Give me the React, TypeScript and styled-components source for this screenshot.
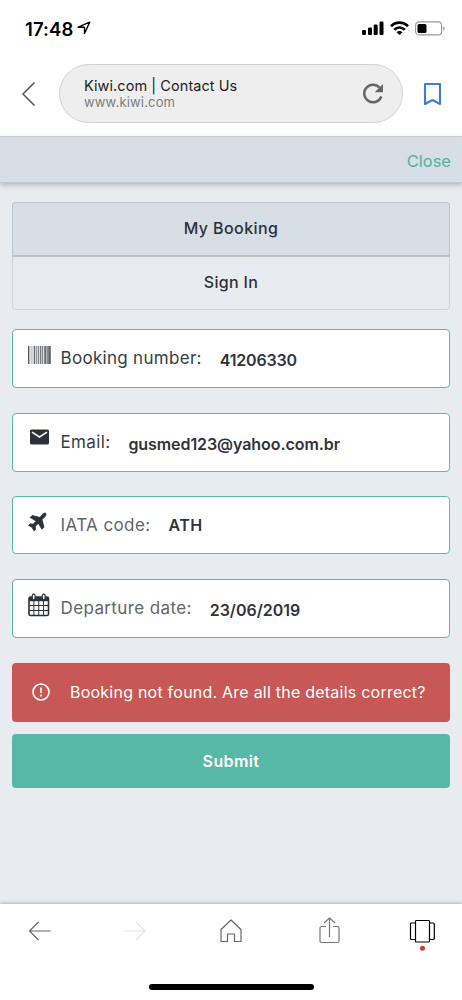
import React from 'react';
import styled, { createGlobalStyle } from 'styled-components';

const Global = createGlobalStyle`
  * { box-sizing: border-box; }
  body { margin: 0; background: #fff; font-family: Inter, "Liberation Sans", sans-serif; }
  button { font: inherit; border: 0; background: none; padding: 0; margin: 0; color: inherit; }
  svg { display: block; flex: none; }
`;

const Screen = styled.div`
  width: 462px;
  height: 1000px;
  display: flex;
  flex-direction: column;
  overflow: hidden;
  background: #e8ecf1;
`;

const StatusBar = styled.div`
  height: 56px;
  flex: none;
  background: #fff;
  display: flex;
  align-items: center;
  justify-content: space-between;
  padding: 0 17px 0 25px;
`;

const Cluster = styled.div<{ $gap: number }>`
  display: flex;
  align-items: center;
  gap: ${(p) => p.$gap}px;
`;

const Label = styled.span<{
  $size: number;
  $weight?: number;
  $color?: string;
  $track?: number;
  $drop?: number;
  $lift?: number;
}>`
  font-size: ${(p) => p.$size}px;
  font-weight: ${(p) => p.$weight ?? 400};
  color: ${(p) => p.$color ?? '#2c3138'};
  letter-spacing: ${(p) => p.$track ?? 0}px;
  line-height: 20px;
  white-space: nowrap;
  padding-top: ${(p) => p.$drop ?? 0}px;
  padding-bottom: ${(p) => p.$lift ?? 0}px;
`;

const AddressBar = styled.div`
  height: 81px;
  flex: none;
  background: #fff;
  border-bottom: 1px solid #cbd1d6;
  display: flex;
  align-items: flex-start;
  padding: 8px 19px 0 20px;
`;

const NavSlot = styled.button<{ $width: number }>`
  width: ${(p) => p.$width}px;
  height: 59px;
  display: flex;
  align-items: center;
`;

const Pill = styled.div`
  width: 344px;
  height: 59px;
  border-radius: 30px;
  border: 1px solid #d2d2d2;
  background: #eee;
  display: flex;
  align-items: center;
  justify-content: space-between;
  padding: 0 18px 0 24px;
  margin-right: 20px;
`;

const PageTitle = styled.div`
  display: flex;
  flex-direction: column;
  span { line-height: 17px; }
`;

const Header = styled.header`
  height: 46px;
  flex: none;
  background: #d7dee6;
  border-bottom: 1px solid #c4cad3;
  box-shadow: 0 2px 5px rgba(90, 100, 120, 0.4);
  display: flex;
  align-items: center;
  justify-content: flex-end;
  padding-right: 11px;
`;

const Main = styled.main`
  flex: 1;
  display: flex;
  flex-direction: column;
  padding: 19px 12px 0;
`;

const Tabs = styled.div`
  height: 108px;
  border: 1px solid #cdd3d8;
  border-radius: 4px;
  display: flex;
  flex-direction: column;
  margin-bottom: 19px;
`;

const Tab = styled.button<{ $active?: boolean }>`
  height: ${(p) => (p.$active ? 55 : 53)}px;
  margin: ${(p) => (p.$active ? '-1px -1px 0' : '0')};
  border: ${(p) => (p.$active ? '1px solid #bac2cb' : '0')};
  border-bottom-width: ${(p) => (p.$active ? 2 : 0)}px;
  border-radius: ${(p) => (p.$active ? '4px 4px 0 0' : '0')};
  background: ${(p) => (p.$active ? '#d7dee6' : 'transparent')};
  display: flex;
  align-items: center;
  justify-content: center;
`;

const Fields = styled.div`
  display: grid;
  grid-template-rows: 59px 59px 58px 59px;
  height: 309px;
  align-content: space-between;
`;

const Field = styled.label`
  border: 1px solid #5dbaa3;
  border-radius: 4px;
  background: #fff;
  display: flex;
  align-items: center;
  padding-left: 15px;
`;

const IconSlot = styled.span<{ $lift: number }>`
  width: 32.5px;
  padding-bottom: ${(p) => p.$lift}px;
`;

const Value = styled(Label)`
  margin-left: 18px;
`;

const Alert = styled.div`
  height: 59px;
  margin-top: 25px;
  border-radius: 4px;
  background: #c75855;
  display: flex;
  align-items: center;
  padding-left: 20px;
  gap: 20px;

  svg { margin-bottom: 1px; }
`;

const Submit = styled.button`
  height: 54px;
  margin-top: 12px;
  border-radius: 4px;
  background: #57b8a6;
`;

const Toolbar = styled.nav`
  height: 96px;
  flex: none;
  background: #fff;
  box-shadow: 0 -1px 3px rgba(0, 0, 0, 0.25);
  display: flex;
  flex-direction: column;
  align-items: center;
  justify-content: space-between;
  padding: 11px 25px 10px;
`;

const ToolRow = styled.div`
  align-self: stretch;
  display: flex;
  justify-content: space-between;
`;

const Tool = styled.button`
  display: flex;
  width: 30px;
  height: 38px;
  justify-content: center;
`;

const HomeIndicator = styled.div`
  width: 165px;
  height: 6px;
  border-radius: 3px;
  background: #000;
`;

const barcode: [number, number, number][] = [
  [0, 1.4, 0.8], [2.6, 1, 0.4], [4.6, 0.8, 0.5], [6.2, 1, 0.9], [8.3, 1, 0.7], [10.3, 0.9, 0.8],
  [12.2, 1.1, 0.8], [14.2, 1, 0.75], [16.2, 2, 0.7], [18.7, 1, 0.8], [20.2, 2.6, 0.75],
];

const BarcodeIcon = () => (
  <svg width="23" height="18" viewBox="0 0 23 18" fill="#2c3138">
    {barcode.map(([x, w, o]) => <rect key={x} x={x} width={w} height="18" opacity={o} />)}
  </svg>
);

const MailIcon = () => (
  <svg width="23" height="16" viewBox="0 0 23 16">
    <rect x="2" y="0.5" width="19" height="15" rx="1.6" fill="#2c3138" />
    <path d="M4 3.2 11.5 8 19 3.2" fill="none" stroke="#fff" strokeWidth="1.5" />
  </svg>
);

const PlaneIcon = () => (
  <svg width="20" height="20" viewBox="0 0 20 20">
    <path
      d="M17.600 1.300c.8.9.3 2.300-.6 3.200l-3 3.100 1.900 7.700-2 1.900-3.500-6-3.300 3.200.4 3-1.500 1.400-1.900-3.500L.7 13.400l1.400-1.500 3 .4 3.200-3.300L2.200 5.500l2-2 7.600 1.900 3-3.100c.9-.9 2.200-1.600 2.800-1z"
      fill="#2c3138"
      stroke="#2c3138"
      strokeWidth="0.900"
      strokeLinejoin="round"
    />
  </svg>
);

const CalendarIcon = () => (
  <svg width="22" height="24" viewBox="0 0 22 24">
    <rect x="1" y="4" width="19.500" height="18.500" rx="1.500" fill="#fff" stroke="#2c3138" strokeWidth="1.600" />
    <path d="M1 4h19.500v4.200H1z" fill="#2c3138" />
    <path d="M5.900 8V22.500M10.750 8V22.500M15.600 8V22.500M1 12.500h19.500M1 17.500h19.500" stroke="#2c3138" strokeWidth="1" />
    <rect x="4.300" y="1.200" width="2.800" height="5.700" rx="1.400" fill="#fff" stroke="#2c3138" strokeWidth="1.200" />
    <rect x="14.300" y="1.200" width="2.800" height="5.700" rx="1.400" fill="#fff" stroke="#2c3138" strokeWidth="1.200" />
  </svg>
);

const fields = [
  { icon: <BarcodeIcon />, iconLift: 8, label: 'Booking number:', color: '#383d43', track: 0.3, lift: 2, value: '41206330', drop: 3, valueTrack: -0.2 },
  { icon: <MailIcon />, iconLift: 10, label: 'Email:', color: '#383d43', track: 0.35, lift: 0, value: 'gusmed123@yahoo.com.br', drop: 3, valueTrack: -0.07 },
  { icon: <PlaneIcon />, iconLift: 7, label: 'IATA code:', color: '#60656c', track: 0.4, lift: 0, value: 'ATH', drop: 0, valueTrack: 0.5 },
  { icon: <CalendarIcon />, iconLift: 6, label: 'Departure date:', color: '#60656c', track: 0.38, lift: 0, value: '23/06/2019', drop: 3, valueTrack: -0.02 },
];

export default function App() {
  return (
    <Screen>
      <Global />
      <StatusBar>
        <Cluster $gap={4}>
          <Label $size={18.5} $weight={600} $color="#000" $track={0.1} $drop={1}>17:48</Label>
          <svg width="14" height="14" viewBox="0 0 14 14" fill="none" stroke="#000" strokeWidth="1.400" strokeLinejoin="round">
            <path d="M12.700 1.200 1.200 6.200H7.500V12.500z" />
          </svg>
        </Cluster>
        <Cluster $gap={6}>
          <svg width="22" height="14" viewBox="0 0 22 14">
            <rect x="0" y="9" width="4" height="5" rx="1.200" />
            <rect x="6" y="6.500" width="4" height="7.500" rx="1.200" />
            <rect x="11.700" y="3.500" width="4" height="10.500" rx="1.200" />
            <rect x="17.500" y="0.500" width="4" height="13.500" rx="1.200" />
          </svg>
          <svg width="19" height="14" viewBox="0 0 19 14" fill="none" stroke="#000" strokeWidth="2.700">
            <path d="M1 5.200a12 12 0 0 1 17 0" />
            <path d="M4.200 8.700a7.500 7.500 0 0 1 10.600 0" />
            <path d="M9.500 14 6.600 11.200a4 4 0 0 1 5.800 0z" fill="#000" stroke="none" />
          </svg>
          <svg width="30" height="15" viewBox="0 0 30 15">
            <rect x="0.600" y="0.900" width="26" height="13" rx="3.500" fill="none" stroke="#999" strokeWidth="1.100" />
            <rect x="2.500" y="2.900" width="9" height="9" rx="1.500" />
            <path d="M28.200 5.200c2 .8 2 3.600 0 4.400z" fill="#999" />
          </svg>
        </Cluster>
      </StatusBar>
      <AddressBar>
        <NavSlot $width={39}>
          <svg width="16" height="26" viewBox="0 0 16 26" fill="none" stroke="#555" strokeWidth="1.500">
            <path d="M14.500 1.500 3 13l11.500 11.500" />
          </svg>
        </NavSlot>
        <Pill>
          <PageTitle>
            <Label $size={14.5} $color="#222" $track={0.06}>Kiwi.com | Contact Us</Label>
            <Label $size={13} $color="#7c7c7c" $track={0.17}>www.kiwi.com</Label>
          </PageTitle>
          <svg width="22" height="22" viewBox="0 0 22 22" fill="none" stroke="#666" strokeWidth="2.500">
            <path d="M17.600 4.600A8.800 8.800 0 1 0 19.300 13.500" />
            <path d="M21 1v8.300h-8.300z" fill="#666" stroke="none" />
          </svg>
        </Pill>
        <NavSlot $width={20}>
          <svg width="20" height="24" viewBox="0 0 20 24" fill="none" stroke="#3b7dd8" strokeWidth="2.100" strokeLinejoin="round">
            <path d="M2 2h15v20l-7.500-4L2 22z" />
          </svg>
        </NavSlot>
      </AddressBar>
      <Header>
        <Label $size={16.5} $color="#50b49c" $track={0} $drop={2}>Close</Label>
      </Header>
      <Main>
        <Tabs>
          <Tab $active><Label $size={16} $weight={500} $track={0.4} $lift={2}>My Booking</Label></Tab>
          <Tab><Label $size={16} $weight={500} $track={0.3} $lift={2}>Sign In</Label></Tab>
        </Tabs>
        <Fields>
          {fields.map((f) => (
            <Field key={f.label}>
              <IconSlot $lift={f.iconLift}>{f.icon}</IconSlot>
              <Label $size={17} $color={f.color} $track={f.track} $lift={f.lift}>{f.label}</Label>
              <Value $size={16} $weight={600} $color="#30343a" $drop={f.drop} $track={f.valueTrack}>{f.value}</Value>
            </Field>
          ))}
        </Fields>
        <Alert>
          <svg width="18" height="18" viewBox="0 0 18 18" fill="none" stroke="#fff" strokeWidth="1.600">
            <circle cx="9" cy="9" r="8" />
            <path d="M9 4.500v5.500M9 11.600v1.800" />
          </svg>
          <Label $size={16} $color="#fff" $track={0.23} $lift={1}>Booking not found. Are all the details correct?</Label>
        </Alert>
        <Submit><Label $size={16} $weight={600} $color="#fff" $track={0.4}>Submit</Label></Submit>
      </Main>
      <Toolbar>
        <ToolRow>
          <Tool>
            <svg width="24" height="32" viewBox="0 0 24 32" fill="none" stroke="#666" strokeWidth="1.200">
              <path d="M22.700 16H1.700M10.500 7l-9 9 9 9" />
            </svg>
          </Tool>
          <Tool>
            <svg width="24" height="32" viewBox="0 0 24 32" fill="none" stroke="#e3e3e3" strokeWidth="1.200">
              <path d="M0 16h21M12 7l9 9-9 9" />
            </svg>
          </Tool>
          <Tool>
            <svg width="24" height="32" viewBox="0 0 24 32" fill="none" stroke="#666" strokeWidth="1.200" strokeLinejoin="round">
              <path d="M2 14.500 12 5l10 9.500V26.500h-6.500v-7.500h-7v7.500H2z" />
            </svg>
          </Tool>
          <Tool>
            <svg width="30" height="32" viewBox="0 0 30 32" fill="none" stroke="#777" strokeWidth="1.200" strokeLinejoin="round">
              <path d="M14 11.500H9.500a1.500 1.500 0 0 0-1.500 1.500v13a1.500 1.500 0 0 0 1.500 1.500h16a1.500 1.500 0 0 0 1.500-1.500v-13a1.500 1.500 0 0 0-1.500-1.500H21M17.500 22V3M12 8l5.500-5L23 8" />
            </svg>
          </Tool>
          <Tool>
            <svg width="26" height="38" viewBox="0 0 26 38" fill="none" stroke="#000" strokeWidth="1.200" strokeLinejoin="round">
              <rect x="6.500" y="5.500" width="14" height="21.500" rx="0.800" />
              <path d="M6.500 8H2.500a1 1 0 0 0-1 1v14.500a1 1 0 0 0 1 1h4M20.500 8h3.800a1 1 0 0 1 1 1v14.500a1 1 0 0 1-1 1h-3.800" />
              <circle cx="13.500" cy="33.300" r="2.500" fill="#d63a2f" stroke="none" />
            </svg>
          </Tool>
        </ToolRow>
        <HomeIndicator />
      </Toolbar>
    </Screen>
  );
}
